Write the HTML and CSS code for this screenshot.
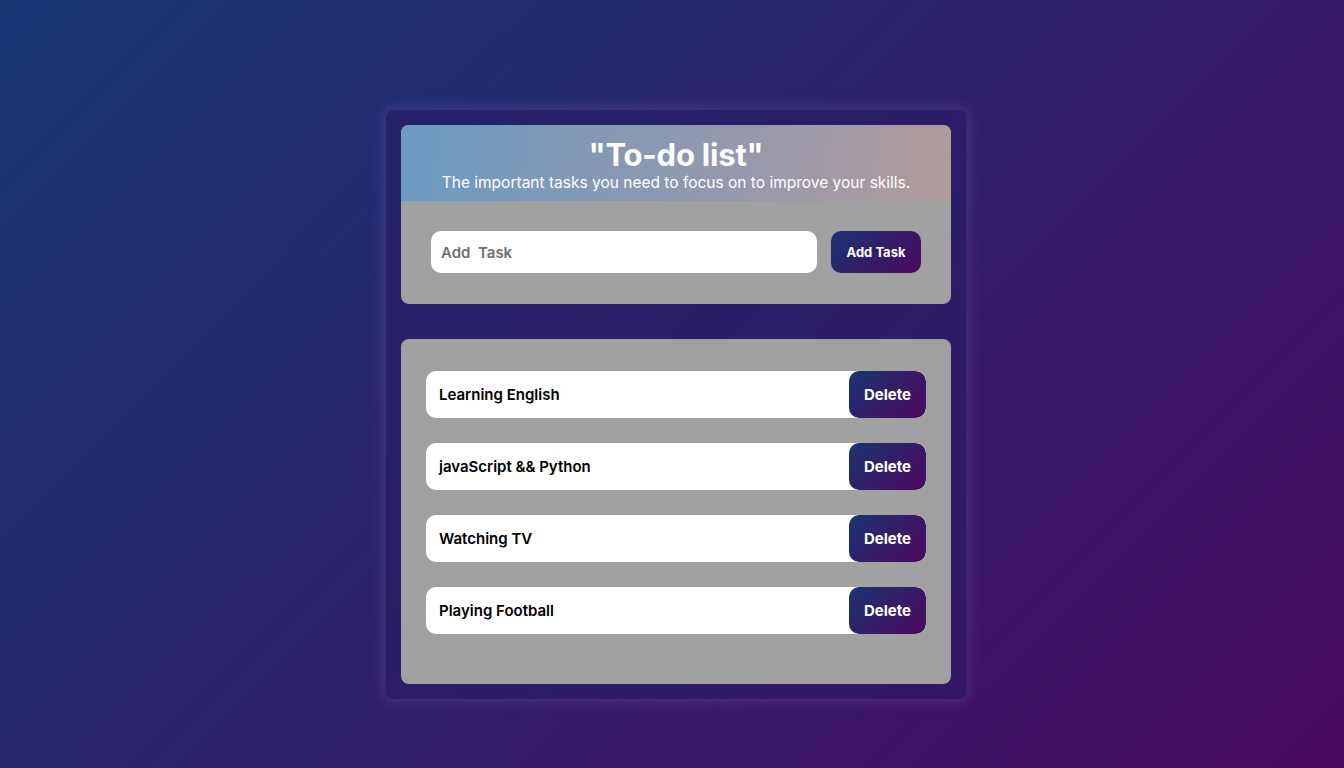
FILE: index.html
```html
<!DOCTYPE html>
<html lang="en">
<head>
<meta charset="utf-8">
<title>To-do list</title>
<link rel="stylesheet" href="styles.css">
</head>
<body>
  <main class="app">
    <section class="card top-card">
      <header class="hero">
        <h1 class="title">"To-do list"</h1>
        <p class="subtitle">The important tasks you need to focus on to improve your skills.</p>
      </header>
      <div class="add-row">
        <input class="task-input" type="text" placeholder="Add  Task">
        <button class="add-btn">Add Task</button>
      </div>
    </section>
    <section class="card list-card">
      <ul class="tasks">
        <li class="task"><span class="task-name">Learning English</span><button class="del-btn">Delete</button></li>
        <li class="task"><span class="task-name">javaScript &amp;&amp; Python</span><button class="del-btn">Delete</button></li>
        <li class="task"><span class="task-name">Watching TV</span><button class="del-btn">Delete</button></li>
        <li class="task"><span class="task-name">Playing Football</span><button class="del-btn">Delete</button></li>
      </ul>
    </section>
  </main>
</body>
</html>
```
FILE: styles.css
```css
* { box-sizing: border-box; }
html, body { height: 100%; }
body {
  margin: 0;
  min-height: 768px;
  background: linear-gradient(135deg, #163676 0%, #2c236c 45%, #4a0b5f 100%);
  font-family: Inter, "Noto Sans", sans-serif;
  display: flex;
  justify-content: center;
  align-items: flex-start;
  padding-top: 110px;
  padding-left: 8px;
}
.app {
  width: 580px;
  padding: 15px;
  border-radius: 8px;
  background: rgba(40, 28, 100, 0.55);
  box-shadow: 0 0 14px 2px rgba(120, 90, 200, 0.35);
  display: flex;
  flex-direction: column;
  gap: 35px;
}
.card {
  background: #a1a1a1;
  border-radius: 8px;
  overflow: hidden;
}
.hero {
  height: 76px;
  background: linear-gradient(100deg, #6b9bc2 0%, #8e98b0 50%, #b19b9b 100%);
  color: #fff;
  text-align: center;
  padding-top: 12px;
}
.title {
  margin: 0;
  font-size: 31px;
  line-height: 35px;
  font-weight: 700;
  letter-spacing: -0.2px;
}
.subtitle {
  margin: 1px 0 0;
  font-size: 15.5px;
  line-height: 20px;
  font-weight: 400;
}
.add-row {
  display: flex;
  gap: 14px;
  padding: 30px 30px 31px 30px;
}
.task-input {
  width: 386px;
  height: 42px;
  border: none;
  border-radius: 10px;
  background: #fff;
  padding: 0 10px;
  font-family: inherit;
  font-size: 15px;
  font-weight: 600;
  outline: none;
}
.task-input::placeholder { color: #6f6f6f; }
.add-btn, .del-btn {
  border: none;
  color: #fff;
  font-family: inherit;
  font-weight: 700;
  background: linear-gradient(135deg, #1b3372 0%, #4b095e 100%);
  cursor: pointer;
}
.add-btn {
  width: 90px;
  height: 42px;
  border-radius: 10px;
  font-size: 13px;
}
.list-card {
  height: 345px;
  padding: 32px 25px 0 25px;
}
.tasks {
  list-style: none;
  margin: 0;
  padding: 0;
  display: flex;
  flex-direction: column;
  gap: 25px;
}
.task {
  height: 47px;
  background: #fff;
  border-radius: 10px;
  display: flex;
  align-items: center;
  justify-content: space-between;
  overflow: hidden;
}
.task-name {
  padding-left: 13px;
  font-size: 15px;
  font-weight: 600;
  color: #000;
}
.del-btn {
  width: 77px;
  height: 47px;
  border-radius: 10px;
  font-size: 15px;
}
```
